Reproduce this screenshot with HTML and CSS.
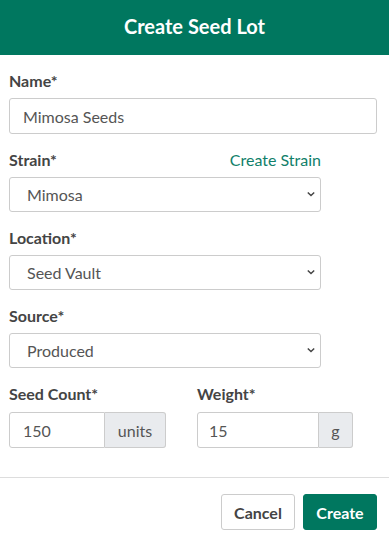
FILE: index.html
```html
<!DOCTYPE html>
<html lang="en">

<head>
  <meta charset="UTF-8" />
  <meta name="viewport" content="width=device-width, initial-scale=1.0" />
  <title>Create Seed Lot</title>
  <link rel="stylesheet" href="styles.css">
</head>

<body>
  <div class="modal">
    <!-- Header -->
    <div class="modal-header">
      <h1>Create Seed Lot</h1>
    </div>

    <!-- Form -->
    <form class="modal-body">
      <div class="form-group">
        <label for="name">Name*</label>
        <input id="name" class="form-control" type="text" value="Mimosa Seeds" />
      </div>

      <div class="form-group narrow">
        <div class="label-row">
          <label for="strain">Strain*</label>
          <a href="#" class="link">Create Strain</a>
        </div>
        <div class="select-wrap">
          <select id="strain" class="form-control">
            <option>Mimosa</option>
          </select>
          <svg class="chevron" viewBox="0 0 10 6"><path d="M1 1l4 4 4-4" /></svg>
        </div>
      </div>

      <div class="form-group narrow">
        <label for="location">Location*</label>
        <div class="select-wrap">
          <select id="location" class="form-control">
            <option>Seed Vault</option>
          </select>
          <svg class="chevron" viewBox="0 0 10 6"><path d="M1 1l4 4 4-4" /></svg>
        </div>
      </div>

      <div class="form-group narrow">
        <label for="source">Source*</label>
        <div class="select-wrap">
          <select id="source" class="form-control">
            <option>Produced</option>
          </select>
          <svg class="chevron" viewBox="0 0 10 6"><path d="M1 1l4 4 4-4" /></svg>
        </div>
      </div>

      <div class="form-row">
        <div class="form-group count">
          <label for="count">Seed Count*</label>
          <div class="input-group">
            <input id="count" class="form-control" type="text" value="150" />
            <span class="addon">units</span>
          </div>
        </div>
        <div class="form-group weight">
          <label for="weight">Weight*</label>
          <div class="input-group">
            <input id="weight" class="form-control" type="text" value="15" />
            <span class="addon">g</span>
          </div>
        </div>
      </div>
    </form>

    <!-- Footer -->
    <div class="modal-footer">
      <button class="btn btn-light">Cancel</button>
      <button class="btn btn-primary">Create</button>
    </div>
  </div>
</body>

</html>
```

FILE: styles.css
```css
* {
  margin: 0;
  padding: 0;
  box-sizing: border-box;
}

body {
  font-family: "Lato", "Open Sans", sans-serif;
  background-color: #fff;
  color: #444;
  width: 389px;
}

/* Header */
.modal-header {
  height: 55px;
  background-color: #00775f;
  display: flex;
  align-items: center;
  justify-content: center;
}

.modal-header h1 {
  color: #fff;
  font-size: 20px;
  font-weight: 700;
  line-height: 24px;
  margin-top: -3px;
}

/* Body */
.modal-body {
  padding: 16px 12px 29px 9px;
}

.form-group {
  margin-bottom: 16px;
}

.form-group.narrow {
  width: 312px;
}

label {
  display: block;
  font-size: 16px;
  font-weight: 700;
  line-height: 20px;
  color: #444;
  margin-bottom: 7px;
}

.label-row {
  display: flex;
  justify-content: space-between;
  align-items: flex-start;
}

.link {
  color: #11806a;
  text-decoration: none;
  font-size: 16px;
  line-height: 20px;
}

.form-control {
  display: block;
  width: 100%;
  height: 35px;
  border: 1px solid #ccc;
  border-radius: 3px;
  background-color: #fff;
  font-family: inherit;
  font-size: 16px;
  color: #555;
  padding: 0 13px;
  outline: none;
}

#name {
  margin-top: 7px;
  height: 36px;
}

.select-wrap {
  position: relative;
}

select.form-control {
  appearance: none;
  -webkit-appearance: none;
  padding-left: 17px;
}

.chevron {
  position: absolute;
  right: 6px;
  top: 14px;
  width: 8px;
  height: 6px;
  fill: none;
  stroke: #444;
  stroke-width: 1.8;
  pointer-events: none;
}

/* Count & weight */
.form-row {
  display: flex;
  gap: 31px;
}

.form-row .form-group {
  margin-bottom: 0;
}

.form-row label {
  margin-bottom: 8px;
}

.count {
  width: 157px;
}

.weight {
  width: 156px;
}

.input-group {
  display: flex;
}

.input-group .form-control {
  flex: 1;
  min-width: 0;
  height: 36px;
  border-radius: 3px 0 0 3px;
  padding-left: 13px;
}

.weight .input-group .form-control {
  padding-left: 11px;
}

.addon {
  display: flex;
  align-items: center;
  justify-content: center;
  height: 36px;
  padding: 0 8px;
  background-color: #e9ebee;
  border: 1px solid #ccc;
  border-left: none;
  border-radius: 0 3px 3px 0;
  font-size: 16px;
  color: #555;
}

.count .addon {
  width: 61px;
}

.weight .addon {
  width: 34px;
}

/* Footer */
.modal-footer {
  border-top: 1px solid #ddd;
  padding: 16px 12px 11px;
  display: flex;
  justify-content: flex-end;
  gap: 8px;
}

.btn {
  height: 36px;
  width: 74px;
  border-radius: 3px;
  font-family: inherit;
  font-size: 16px;
  font-weight: 700;
  cursor: pointer;
}

.btn-light {
  background-color: #fff;
  border: 1px solid #ccc;
  color: #444;
}

.btn-primary {
  background-color: #00775f;
  border: 1px solid #00775f;
  color: #fff;
}
```
